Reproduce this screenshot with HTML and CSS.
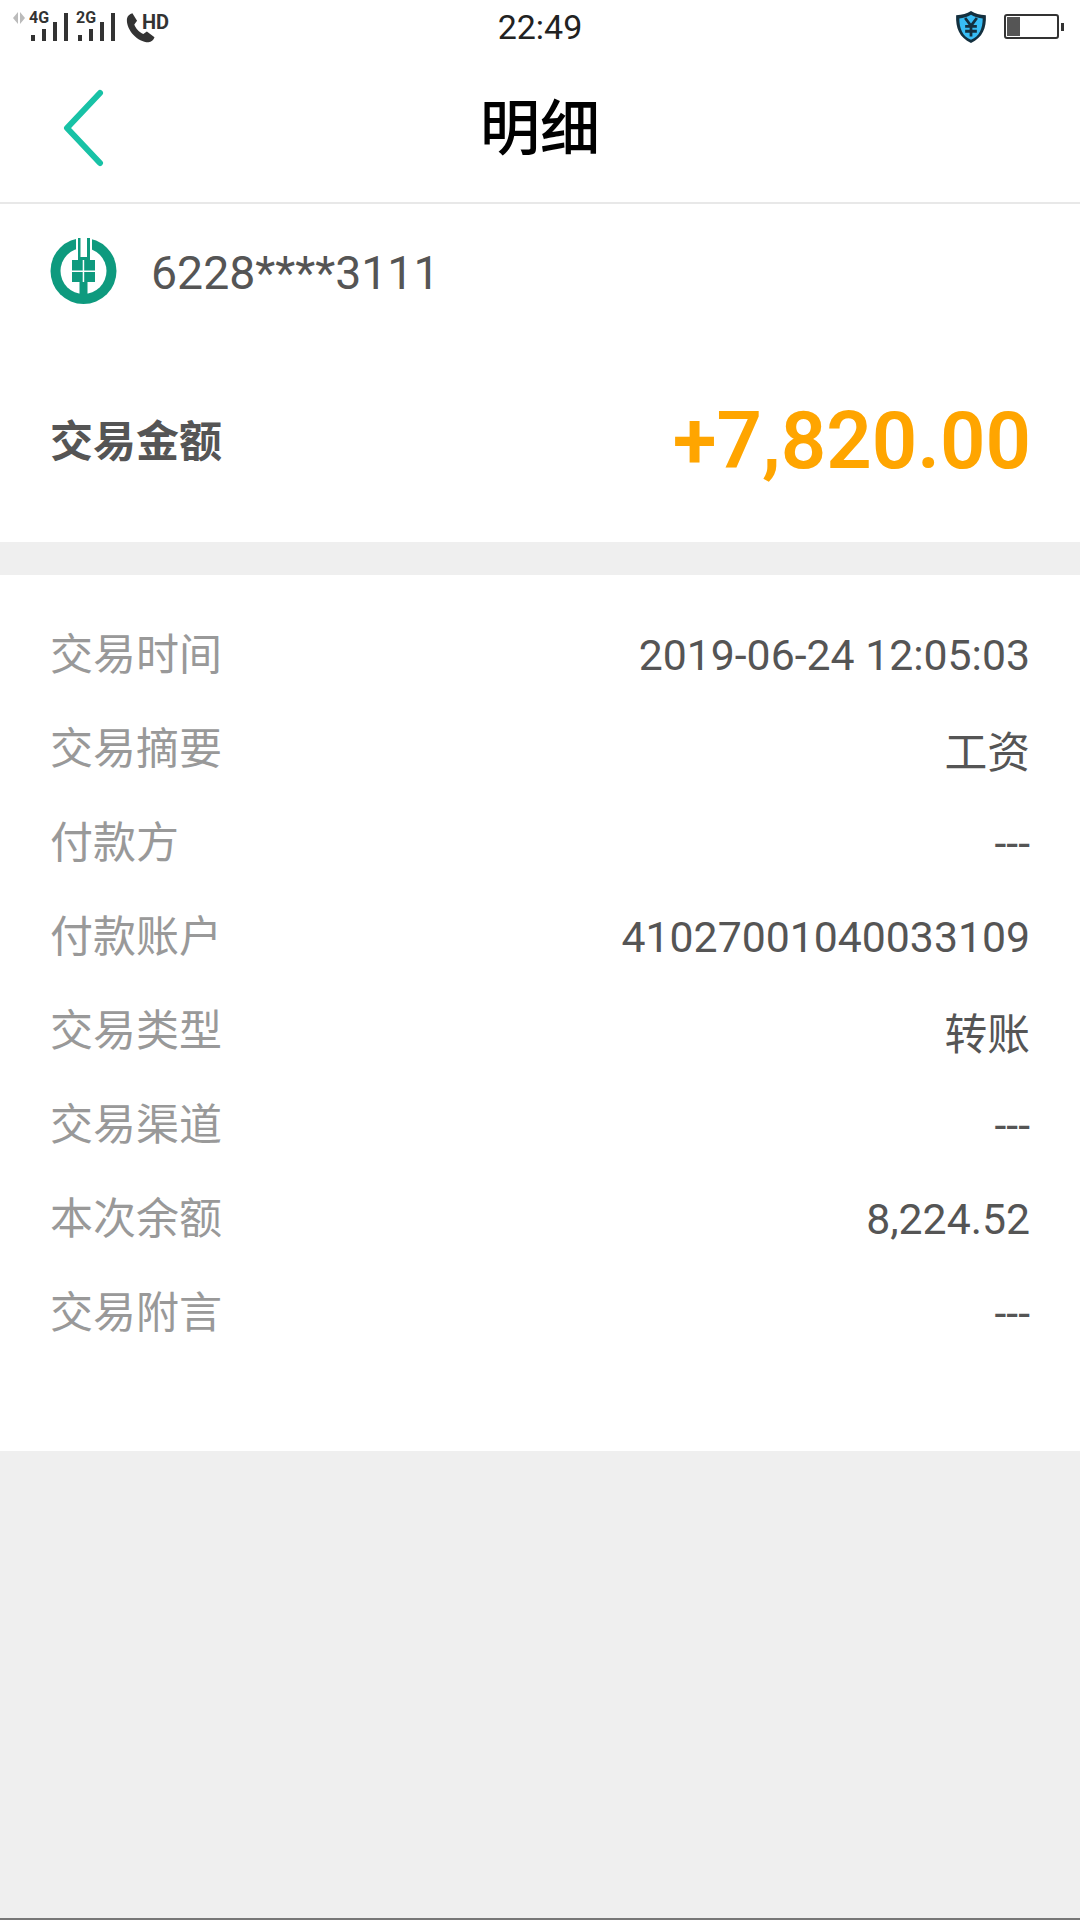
FILE: index.html
```html
<!DOCTYPE html>
<html lang="zh-CN">
<head>
    <meta charset="UTF-8" />
    <title>明细</title>
    <link rel="stylesheet" href="styles.css">
</head>
<body>
    <div class="status-bar">
        <div class="status-left">
            <svg class="data-arrows" width="12" height="12" viewBox="0 0 12 12"><path d="M5 0v12L0 6zM7 0l5 6-5 6z" fill="#bbb"/></svg>
            <div class="sim"><span class="sim-label">4G</span>
                <svg width="37" height="28" viewBox="0 0 37 28"><path d="M0 22h4v6H0zM11 16h4v12h-4zM22 9h4v19h-4zM33 0h4v28h-4z" fill="#333"/></svg>
            </div>
            <div class="sim"><span class="sim-label">2G</span>
                <svg width="37" height="28" viewBox="0 0 37 28"><path d="M0 22h4v6H0zM11 16h4v12h-4zM22 9h4v19h-4zM33 0h4v28h-4z" fill="#333"/></svg>
            </div>
            <div class="call">
                <svg width="30" height="30" viewBox="2 1 21 22"><path d="M6.200 1.200 9.600 6.600 7.600 9.400c.9 2.700 3.500 5.600 6.600 7l2.600-1.800 5.600 4.200c-.7 2-2.400 3.600-4.400 3.600C9.600 22.400 1.400 12.800 2.200 5.200 2.500 3.200 4.200 1.600 6.200 1.200z" fill="#333"/></svg>
                <span class="hd">HD</span>
            </div>
        </div>
        <div class="status-time">22:49</div>
        <div class="status-right">
            <svg width="34" height="34" viewBox="0 0 32 32">
                <path d="M16 1c4 2.500 8 3.500 14 4 .5 12-3 21-14 26C5 26 1.500 17 2 5c6-.5 10-1.500 14-4z" fill="#14303f"/>
                <path d="M16 4.500c3.500 2 7 3 11 3.500 0 9-3 17-11 20C8 25 5 17 5 8c4-.5 7.500-1.500 11-3.500z" fill="#38bdf5"/>
                <path d="M10.500 7.500 16 15l5.500-7.500M16 15v10M10.500 15.500h11M10.500 20h11" fill="none" stroke="#14303f" stroke-width="2.600"/>
            </svg>
            <div class="battery"><div class="battery-level"></div></div>
            <div class="battery-cap"></div>
        </div>
    </div>

    <div class="title-bar">
        <svg class="back" width="44" height="78" viewBox="0 0 44 78"><path d="M39 4 6 39l33 35" fill="none" stroke="#18c2a6" stroke-width="6" stroke-linecap="round" stroke-linejoin="round"/></svg>
        <h1>明细</h1>
    </div>

    <section class="summary">
        <div class="account">
            <svg class="bank-logo" width="67" height="66" viewBox="0 0 67 66">
                <circle cx="33.500" cy="33" r="33" fill="#0e9a7e"/>
                <circle cx="33.500" cy="33" r="23" fill="#fff"/>
                <path d="M26 0h16v14H26z" fill="#fff"/>
                <path d="M28 0h12v24H28z" fill="#0e9a7e"/>
                <path d="M30.500 0H37v19h-6.500z" fill="#fff"/>
                <path d="M22 22h23v22H22zM29.500 44h8v21h-8z" fill="#0e9a7e"/>
                <path d="M22 32.500h23V34H22zM32.700 22h1.500v22h-1.500z" fill="#fff"/>
            </svg>
            <span class="card-no">6228****3111</span>
        </div>
        <div class="amount-row">
            <span class="amount-label">交易金额</span>
            <span class="amount">+7,820.00</span>
        </div>
    </section>

    <section class="details">
        <div class="row"><span class="key">交易时间</span><span class="val">2019-06-24 12:05:03</span></div>
        <div class="row"><span class="key">交易摘要</span><span class="val">工资</span></div>
        <div class="row"><span class="key">付款方</span><span class="val">---</span></div>
        <div class="row"><span class="key">付款账户</span><span class="val">41027001040033109</span></div>
        <div class="row"><span class="key">交易类型</span><span class="val">转账</span></div>
        <div class="row"><span class="key">交易渠道</span><span class="val">---</span></div>
        <div class="row"><span class="key">本次余额</span><span class="val">8,224.52</span></div>
        <div class="row"><span class="key">交易附言</span><span class="val">---</span></div>
    </section>

    <div class="page-end"></div>
</body>
</html>
```

FILE: styles.css
```css
* { box-sizing: border-box; }
html, body { height: 100%; }
body {
    margin: 0;
    height: 1920px;
    display: flex;
    flex-direction: column;
    overflow: hidden;
    background-color: #efefef;
    font-family: Roboto, "Noto Sans CJK SC", sans-serif;
}

.status-bar {
    height: 50px;
    padding: 0 16px 0 13px;
    display: flex;
    align-items: center;
    justify-content: space-between;
    background-color: #fff;
    color: #333;
}
.status-left { width: 240px; display: flex; align-items: flex-start; height: 42px; }
.data-arrows { margin: 8px 4px 0 0; }
.sim { position: relative; width: 47px; height: 42px; padding: 9px 0 0 2px; }
.sim-label { position: absolute; top: 7px; left: 0; font-size: 16px; font-weight: 700; line-height: 14px; }
.call { display: flex; align-items: flex-start; margin: 9px 0 0 3px; }
.hd { font-size: 20px; font-weight: 700; line-height: 20px; margin: -1px 0 0 -14px; }
.status-time { font-size: 34px; line-height: 54px; height: 50px; margin-left: 3px; color: #222; }
.status-right { width: 240px; padding-top: 3px; display: flex; align-items: center; justify-content: flex-end; }
.status-right svg { margin-right: 16px; }
.battery { width: 55px; height: 25px; padding: 1px; border: 2px solid #333; border-radius: 3px; }
.battery-level { width: 13px; height: 100%; background-color: #555; }
.battery-cap { width: 3px; height: 8px; margin-left: 2px; background-color: #333; }

.title-bar {
    position: relative;
    height: 154px;
    padding-bottom: 6px;
    display: flex;
    align-items: center;
    justify-content: center;
    background-color: #fff;
    border-bottom: 2px solid #e8e8e8;
}
.title-bar h1 { margin: 0; font-size: 60px; font-weight: 500; color: #000; }
.back { position: absolute; left: 61px; top: 39px; }

.summary { height: 338px; padding: 34px 49px 0 50px; background-color: #fff; }
.account { display: flex; align-items: center; }
.bank-logo { margin-right: 34px; }
.card-no { font-size: 46.4px; margin-top: 3px; color: #555; }
.amount-row { display: flex; align-items: center; justify-content: space-between; margin-top: 90px; }
.amount-label { font-size: 43px; font-weight: 700; margin-bottom: 6px; color: #555; }
.amount { font-size: 79.7px; font-weight: 600; line-height: 94px; color: #ffa500; }

.details { margin-top: 33px; height: 876px; padding: 31px 50px 0; background-color: #fff; }
.row { height: 94px; display: flex; align-items: center; justify-content: space-between; }
.key { font-size: 43px; margin-bottom: 5px; color: #999; }
.val { font-size: 42.75px; margin-top: 3px; color: #555; }

.page-end { margin-top: auto; height: 2px; background-color: #777; }
```
